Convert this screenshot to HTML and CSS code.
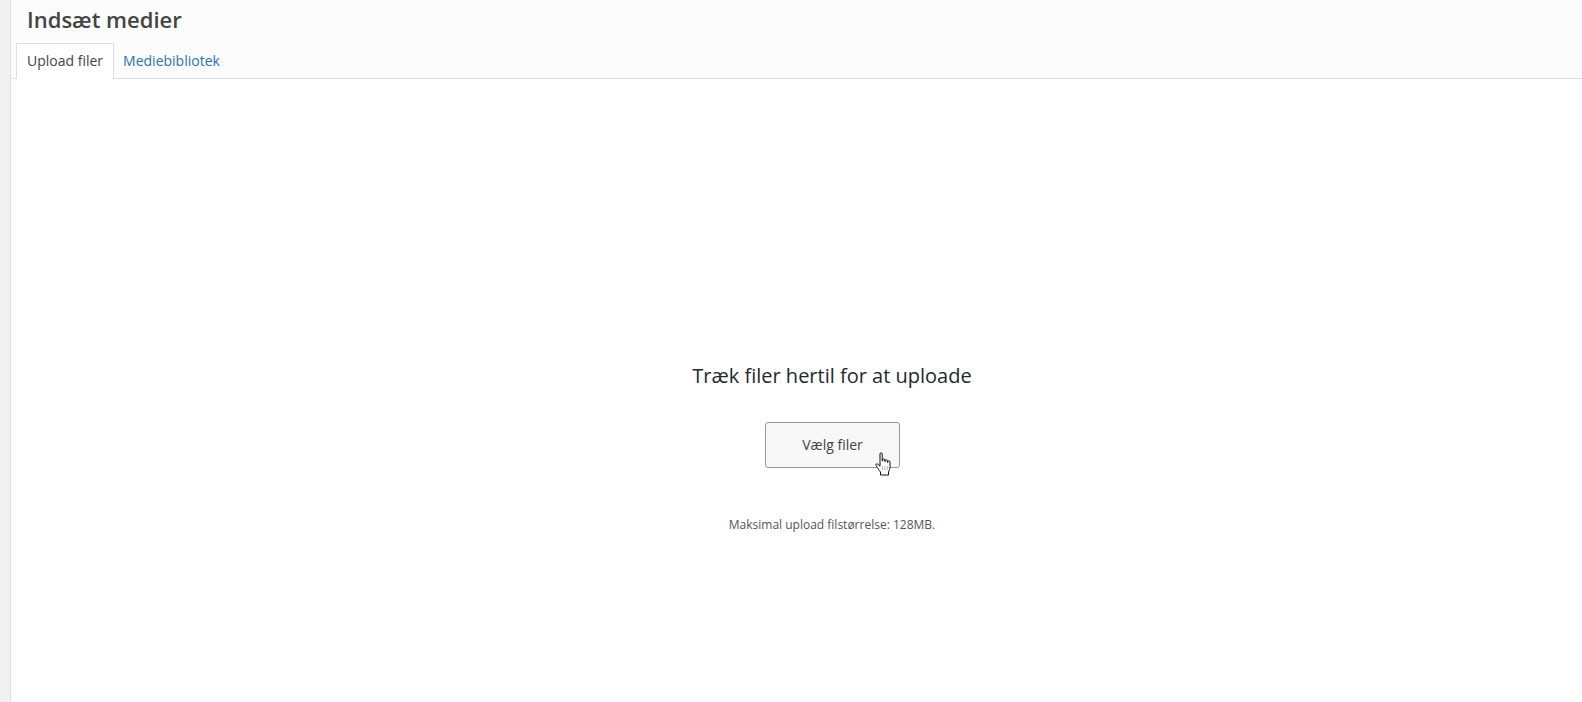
FILE: index.html
```html
<!DOCTYPE html>
<html lang="da">
<head>
<meta charset="utf-8">
<title>Indsæt medier</title>
<link rel="stylesheet" href="styles.css">
</head>
<body>
<div class="page">
  <aside class="rail"></aside>
  <main class="modal">
    <header class="head">
      <h1 class="title">Indsæt medier</h1>
      <nav class="tabs">
        <a class="tab tab-active">Upload filer</a>
        <a class="tab">Mediebibliotek</a>
      </nav>
    </header>
    <section class="drop">
      <h2 class="drop-title">Træk filer hertil for at uploade</h2>
      <div class="btn-wrap">
        <button class="btn">Vælg filer</button>
        <svg class="cursor" width="17" height="24" viewBox="0 0 17 24">
          <path d="M5 1.800c0-1.300 2.200-1.300 2.200 0V9h.4V7.800c0-1.200 2.200-1.200 2.200 0V9.500h.4V8.600c0-1.200 2.200-1.200 2.200 0v1.900h.4V9.700c0-1.200 2.200-1.200 2.200 0V15c0 2-1 3.500-1.500 5v3H5.500v-3C4 18 2.800 16.500 1.100 13.500c-.7-1.300.8-2.300 1.800-1.300L5 14.200z" fill="#fff" stroke="#111" stroke-width="1" stroke-linejoin="round"/>
          <path d="M7.500 14v4M9.900 14v4M12.300 14v4" stroke="#999" stroke-width=".7" fill="none"/>
        </svg>
      </div>
      <p class="note">Maksimal upload filstørrelse: 128MB.</p>
    </section>
  </main>
</div>
</body>
</html>
```
FILE: styles.css
```css
html, body { margin: 0; height: 100%; background: #fff; }
body { font-family: "Open Sans", "Noto Sans", sans-serif; overflow: hidden; }
.page { display: flex; height: 702px; }
.rail { width: 10px; background: #f1f1f1; border-right: 1px solid #ddd; flex: none; }
.modal { flex: 1; display: flex; flex-direction: column; min-width: 0; }
.head { background: #fcfcfc; border-bottom: 1px solid #dfdfdf; height: 79px; box-sizing: border-box; padding: 0 0 0 5px; display: flex; flex-direction: column; }
.title { margin: 0; padding: 0 0 0 11px; font-size: 22px; font-weight: 600; line-height: 38px; height: 43px; color: #444; }
.tabs { display: flex; height: 36px; margin-bottom: -1px; }
.tab { font-size: 14px; line-height: 20px; padding: 7px 10px 8px; color: #2b74a5; border: 1px solid transparent; border-bottom: 0; }
.tab-active { background: #fff; color: #444; border-color: #dfdfdf; margin-right: -2px; }
.drop { flex: 1; display: flex; flex-direction: column; align-items: center; padding: 277px 0 0 71px; box-sizing: border-box; }
.drop-title { margin: 0; font-size: 20px; font-weight: 400; line-height: 40px; color: #23282d; }
.btn-wrap { position: relative; margin-top: 26px; }
.btn { display: block; width: 135px; height: 46px; background: repeating-conic-gradient(#f9f9f9 0 25%, #f6f6f6 0 50%) 0 0 / 4px 4px; border: 1px solid #999; border-radius: 3px; font: 14px/20px "Open Sans", sans-serif; color: #444; padding: 0 0 1px 1px; }
.cursor { position: absolute; left: 110px; top: 30px; }
.note { margin: 47px 0 0; font-size: 12px; line-height: 20px; color: #555; }
```
